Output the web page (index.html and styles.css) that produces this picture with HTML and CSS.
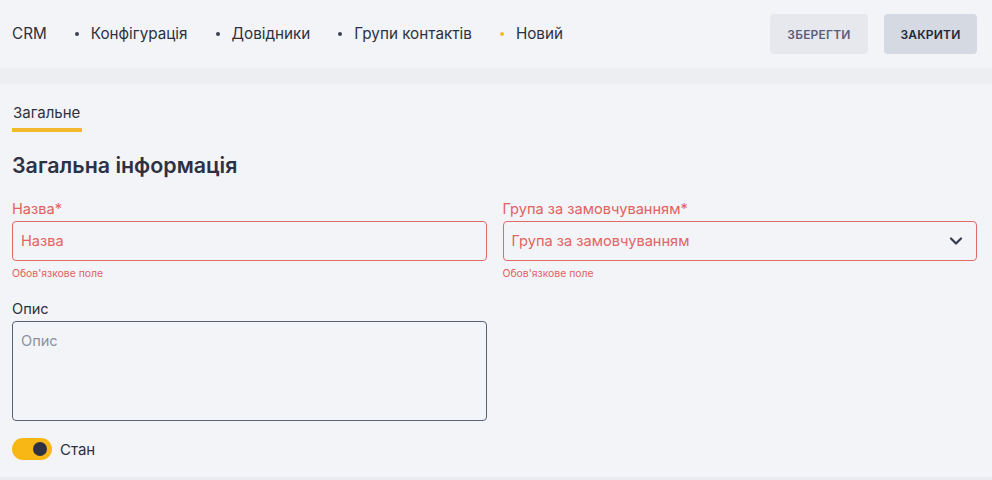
FILE: index.html
```html
<!DOCTYPE html>
<html lang="uk">
<head>
<meta charset="utf-8">
<title>Новий</title>
<link rel="stylesheet" href="styles.css">
</head>
<body>
<header class="topbar">
  <nav class="crumbs">
    <span class="crumb">CRM</span>
    <span class="dot"></span>
    <span class="crumb">Конфігурація</span>
    <span class="dot"></span>
    <span class="crumb">Довідники</span>
    <span class="dot"></span>
    <span class="crumb">Групи контактів</span>
    <span class="dot dot-active"></span>
    <span class="crumb">Новий</span>
  </nav>
  <div class="actions">
    <button class="btn btn-save">ЗБЕРЕГТИ</button>
    <button class="btn btn-close">ЗАКРИТИ</button>
  </div>
</header>
<div class="band"></div>
<main class="content">
  <div class="tabs"><span class="tab">Загальне</span></div>
  <h1 class="title">Загальна інформація</h1>
  <div class="row">
    <div class="field">
      <label class="label label-error">Назва*</label>
      <div class="input input-error"><span class="ph-error">Назва</span></div>
      <div class="hint">Обов'язкове поле</div>
    </div>
    <div class="field">
      <label class="label label-error">Група за замовчуванням*</label>
      <div class="input input-error select">
        <span class="ph-error">Група за замовчуванням</span>
        <svg class="chev" width="14" height="10" viewBox="0 0 14 10"><path d="M2 2.5 L7 7.5 L12 2.5" fill="none" stroke="#363a4f" stroke-width="2.2" stroke-linecap="round" stroke-linejoin="round"/></svg>
      </div>
      <div class="hint">Обов'язкове поле</div>
    </div>
  </div>
  <div class="row row-desc">
    <div class="field">
      <label class="label">Опис</label>
      <div class="textarea"><span class="ph">Опис</span></div>
    </div>
    <div class="field"></div>
  </div>
  <div class="switch-row">
    <span class="switch"><span class="knob"></span></span>
    <span class="switch-label">Стан</span>
  </div>
</main>
</body>
</html>
```
FILE: styles.css
```css
html { background: #e9ebf0; }
body {
  margin: 0;
  font-family: Inter, "Noto Sans", sans-serif;
  color: #2d3142;
  background: #f3f4f8;
}
.topbar {
  height: 68px;
  display: flex;
  align-items: center;
  justify-content: space-between;
  padding: 0 15px 0 12px;
  background: #f3f4f8;
}
.crumbs {
  display: flex;
  align-items: center;
  font-size: 15.25px;
  line-height: 18px;
  color: #2d3142;
}
.dot {
  width: 4px;
  height: 4px;
  border-radius: 50%;
  background: #3b3f52;
  margin: 0 12px 0 28px;
}
.dot-active { background: #f2b92c; }
.actions { display: flex; gap: 16px; }
.btn {
  height: 40px;
  border: none;
  border-radius: 4px;
  font-family: inherit;
  font-size: 12px;
  font-weight: 600;
  letter-spacing: 0.2px;
  padding: 0 16px;
}
.btn-save { background: #e7e8ee; color: #5a5f78; width: 98px; }
.btn-close { background: #d5d9e2; color: #23283a; width: 93px; }
.band { height: 16px; background: #eceef2; }
.content {
  padding: 19px 15px 17px 12px;
  background: #f3f4f8;
}
.tabs { display: flex; }
.tab {
  font-size: 15px;
  line-height: 20px;
  padding: 0 2px 5px 1px;
  border-bottom: 4px solid #f2b92c;
  color: #2d3142;
}
.title {
  margin: 21px 0 0;
  font-size: 21.4px;
  line-height: 24px;
  font-weight: 600;
  color: #2d3142;
}
.row {
  display: grid;
  grid-template-columns: 1fr 1fr;
  column-gap: 16px;
  margin-top: 23px;
}
.row-desc { margin-top: 20px; }
.label {
  display: block;
  font-size: 14.6px;
  line-height: 18px;
  color: #2d3142;
  margin-bottom: 3px;
}
.label-error { color: #e06262; }
.input {
  height: 40px;
  box-sizing: border-box;
  border: 1px solid #5b6076;
  border-radius: 4px;
  display: flex;
  align-items: center;
  justify-content: space-between;
  padding: 0 13px 0 8px;
  font-size: 14.6px;
}
.input-error { border-color: #e06a6a; }
.ph-error { color: #e06565; }
.hint {
  font-size: 10.4px;
  line-height: 12px;
  margin-top: 7px;
  color: #e06262;
}
.textarea {
  height: 100px;
  margin-top: 1px;
  box-sizing: border-box;
  border: 1px solid #5b6076;
  border-radius: 4px;
  padding: 10px 8px;
  font-size: 14.6px;
  line-height: 18px;
}
.ph { color: #8b90a2; }
.switch-row {
  display: flex;
  align-items: center;
  gap: 8px;
  margin-top: 17px;
}
.switch {
  width: 40px;
  height: 22px;
  border-radius: 11px;
  background: #f8b715;
  display: flex;
  align-items: center;
  justify-content: flex-end;
  padding-right: 5px;
  box-sizing: border-box;
}
.knob {
  width: 14px;
  height: 14px;
  border-radius: 50%;
  background: #2d3142;
}
.switch-label { font-size: 15px; color: #2d3142; }
```
